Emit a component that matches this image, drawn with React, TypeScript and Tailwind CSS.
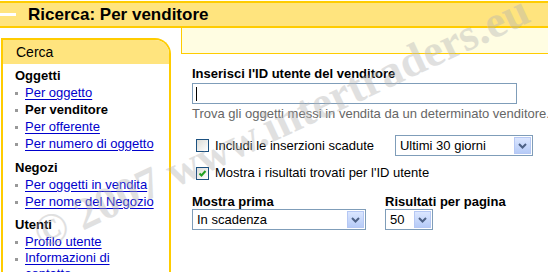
import React from "react";

const font = { fontFamily: '"Liberation Sans", Arial, sans-serif' };

function Arrow() {
  return (
    <div className="w-[17px] h-[17px] mr-px border border-[#b6c8f4] bg-gradient-to-b from-[#dbe6ff] to-[#b6cbf7] flex items-center justify-center">
      <svg width="9" height="6" viewBox="0 0 9 6">
        <path d="M1 1 L4.5 4.5 L8 1" fill="none" stroke="#4d6185" strokeWidth="2" />
      </svg>
    </div>
  );
}

function Select({ label, w }: { label: string; w: string }) {
  return (
    <div className={`${w} h-[21px] border border-[#7f9db9] bg-white flex items-center justify-between`}>
      <span className="pl-[4px] text-[13px] text-black leading-none">{label}</span>
      <Arrow />
    </div>
  );
}

function Checkbox({ checked }: { checked?: boolean }) {
  return (
    <div className="w-[13px] h-[13px] border border-[#1c5180] bg-gradient-to-br from-[#dcdcd7] to-white flex items-center justify-center">
      {checked && (
        <svg width="9" height="9" viewBox="0 0 9 9">
          <path d="M1.5 4.5 L3.5 6.5 L7.5 2" fill="none" stroke="#21a121" strokeWidth="2" />
        </svg>
      )}
    </div>
  );
}

function Item({ text, link = true }: { text: string; link?: boolean }) {
  return (
    <div className="flex items-start h-[17px]">
      <div className="w-[3px] h-[3px] bg-[#999] mt-[8px] mr-[7px]" />
      {link ? (
        <span className="text-[#0000cc] underline underline-offset-[2px] leading-[17px]">{text}</span>
      ) : (
        <span className="font-bold text-black leading-[17px]">{text}</span>
      )}
    </div>
  );
}

export default function App() {
  return (
    <div className="relative w-[548px] h-[272px] overflow-hidden bg-white text-[13px]" style={font}>
      <div className="mt-px h-[27px] border-t-2 border-b-2 border-[#ffcc00] bg-[#ffe47e] flex items-center relative">
        <div className="absolute left-0 top-[10px] w-[16px] h-[3px] bg-white" />
        <span className="ml-[28px] text-[17px] font-bold text-black leading-none">Ricerca: Per venditore</span>
      </div>
      <div className="flex">
        <div className="w-[170px] ml-px mt-[10px] shrink-0">
          <div className="border-2 border-b-0 border-[#ffcc00] rounded-tr-[16px] h-[300px] overflow-hidden">
            <div className="h-[24px] bg-[#ffe47e] flex items-center pl-[13px] text-[14px] text-black">Cerca</div>
            <div className="pl-[12px] pt-[3px]">
              <div className="font-bold text-black leading-[17px]">Oggetti</div>
              <Item text="Per oggetto" />
              <Item text="Per venditore" link={false} />
              <Item text="Per offerente" />
              <Item text="Per numero di oggetto" />
              <div className="font-bold text-black leading-[17px] mt-[7px]">Negozi</div>
              <Item text="Per oggetti in vendita" />
              <Item text="Per nome del Negozio" />
              <div className="font-bold text-black leading-[17px] mt-[6px]">Utenti</div>
              <Item text="Profilo utente" />
              <div className="flex items-start">
                <div className="w-[3px] h-[3px] bg-[#999] mt-[8px] mr-[7px] shrink-0" />
                <span className="text-[#0000cc] underline underline-offset-[2px] leading-[16px] w-[100px]">Informazioni di contatto</span>
              </div>
            </div>
          </div>
        </div>
        <div className="flex-1 min-w-0 ml-[10px]">
          <div className="h-[26px] border-l border-b border-[#ffcc00] bg-[#fffde2]" />
          <div className="pl-[11px]">
            <div className="mt-[12px] font-bold text-black leading-[15px]">Inserisci l'ID utente del venditore</div>
            <div className="mt-[2px] w-[325px] h-[21px] border border-[#7f9db9] bg-white flex items-center">
              <div className="ml-[3px] w-px h-[14px] bg-black" />
            </div>
            <div className="mt-[2px] text-[#666] leading-[16px] whitespace-nowrap">Trova gli oggetti messi in vendita da un determinato venditore.</div>
            <div className="mt-[13px] flex items-center h-[21px]">
              <div className="ml-[4px]"><Checkbox /></div>
              <span className="ml-[6px] text-black">Includi le inserzioni scadute</span>
              <div className="ml-[21px]"><Select label="Ultimi 30 giorni" w="w-[138px]" /></div>
            </div>
            <div className="mt-[9px] flex items-center h-[16px]">
              <div className="ml-[4px]"><Checkbox checked /></div>
              <span className="ml-[6px] text-black">Mostra i risultati trovati per l'ID utente</span>
            </div>
            <div className="mt-[14px] flex">
              <div>
                <div className="font-bold text-black leading-[14px]">Mostra prima</div>
                <Select label="In scadenza" w="w-[174px]" />
              </div>
              <div className="ml-[19px]">
                <div className="font-bold text-black leading-[14px]">Risultati per pagina</div>
                <Select label="50" w="w-[48px]" />
              </div>
            </div>
          </div>
        </div>
      </div>
      <div
        className="pointer-events-none absolute left-[36px] top-[214px] whitespace-nowrap text-[45px] leading-none font-bold text-[#b4b4b4] opacity-40 origin-left -rotate-[25deg]"
        style={{ fontFamily: '"Liberation Serif", "Times New Roman", serif' }}
      >
        © 2007 www.intertraders.eu
      </div>
    </div>
  );
}
